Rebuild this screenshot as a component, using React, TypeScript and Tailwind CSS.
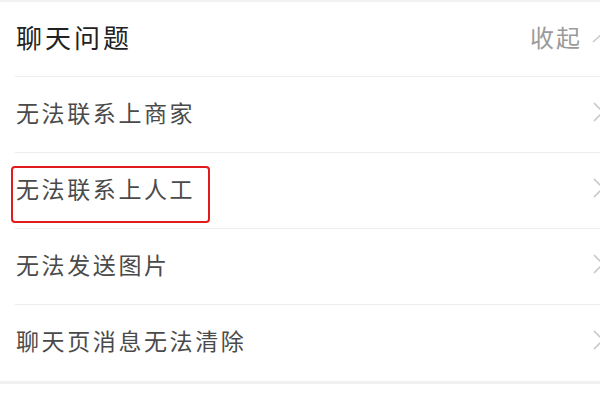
import React from "react";

const ITEMS = [
  "无法联系上商家",
  "无法联系上人工",
  "无法发送图片",
  "聊天页消息无法清除",
];

const ChevronRight: React.FC = () => (
  <svg
    width="14"
    height="20"
    viewBox="0 0 14 20"
    className="mr-[-6px] shrink-0"
    fill="none"
    stroke="#c4c4c4"
    strokeWidth="1.5"
  >
    <path d="M2 1 L11 10 L2 19" />
  </svg>
);

const ChevronUp: React.FC = () => (
  <svg
    width="20"
    height="14"
    viewBox="0 0 20 14"
    className="mr-[-12px] ml-[10px] shrink-0"
    fill="none"
    stroke="#c8c8c8"
    strokeWidth="1.5"
  >
    <path d="M1 12 L11 3 L20 12" />
  </svg>
);

const Divider: React.FC = () => (
  <div className="absolute right-0 bottom-0 left-[15px] h-px bg-[#ececec]" />
);

const Row: React.FC<{ label: string; highlighted?: boolean; last?: boolean }> = ({
  label,
  highlighted,
  last,
}) => {
  return (
    <div className="relative flex h-[76px] items-center pb-[6px] pl-[16px]">
      <p className="flex-1 text-[23px] tracking-[2.6px] text-[#4a4a4a]">
        {label}
      </p>
      <ChevronRight />
      {highlighted && (
        <div className="absolute top-[13px] left-[11px] h-[57px] w-[199px] rounded-[4px] border-2 border-[#e11b1b]" />
      )}
      {!last && <Divider />}
    </div>
  );
};

export default function App() {
  return (
    <div
      className="h-[400px] w-[600px] overflow-hidden bg-white"
      style={{ fontFamily: '"Noto Sans CJK SC", "Noto Sans", sans-serif' }}
    >
      <div className="h-[2px] bg-[#f2f2f2]" />
      <div className="relative flex h-[75px] items-center pb-[6px] pl-[16px]">
        <p className="flex-1 text-[26px] tracking-[3px] text-[#222]">
          聊天问题
        </p>
        <span className="text-[24px] tracking-[2px] text-[#9a9a9a]">收起</span>
        <ChevronUp />
        <Divider />
      </div>
      <div className="flex flex-col">
        {ITEMS.map((item, i) => (
          <Row
            key={item}
            label={item}
            highlighted={i === 1}
            last={i === ITEMS.length - 1}
          />
        ))}
      </div>
      <div className="h-[3px] bg-[#f0f0f0]" />
    </div>
  );
}
